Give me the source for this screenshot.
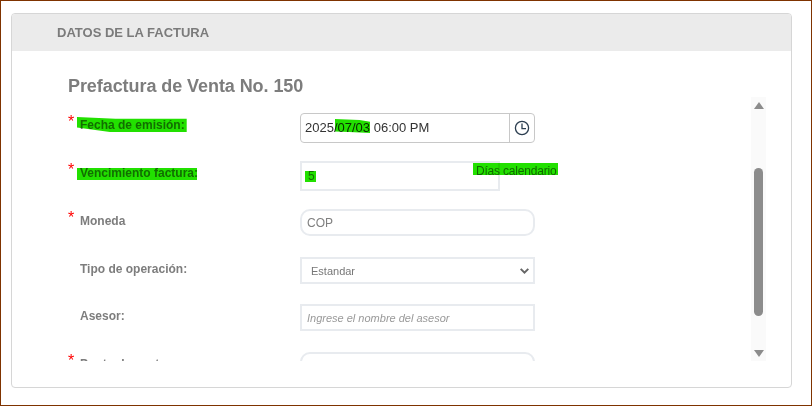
<div class="frame">
  <section class="panel">
    <header class="panel-head">DATOS DE LA FACTURA</header>
    <div class="panel-body">
      <h2 class="title">Prefactura de Venta No. 150</h2>
      <div class="scroll-wrap">
        <div class="form">
          <div class="row">
            <label class="lbl"><span class="req">*</span><span class="txt mark mark-fecha">Fecha de emisión:</span></label>
            <div class="date-group">
              <div class="date-input">2025<span class="mark mark-date">/07/03</span> 06:00 PM</div>
              <button class="clock" aria-label="Abrir reloj">
                <svg width="18" height="18" viewBox="0 0 18 18" fill="none" stroke="#2c3e50" stroke-width="1.3">
                  <circle cx="9" cy="9" r="6.6" />
                  <path d="M9 4.6V9.6H13" />
                </svg>
              </button>
            </div>
          </div>
          <div class="row">
            <label class="lbl"><span class="req">*</span><span class="txt mark mark-venc">Vencimiento factura:</span></label>
            <div class="due">
              <div class="box short"><span class="mark mark-num">5</span></div>
              <span class="days mark mark-days">Días calendario</span>
            </div>
          </div>
          <div class="row">
            <label class="lbl"><span class="req">*</span><span class="txt">Moneda</span></label>
            <div class="box round">COP</div>
          </div>
          <div class="row tight">
            <label class="lbl"><span class="req"></span><span class="txt">Tipo de operación:</span></label>
            <div class="box select">
              <span>Estandar</span>
              <svg width="9" height="6" viewBox="0 0 9 6" fill="none" stroke="#666" stroke-width="2"><path d="M.7 .9L4.5 4.6L8.3 .9" /></svg>
            </div>
          </div>
          <div class="row">
            <label class="lbl"><span class="req"></span><span class="txt">Asesor:</span></label>
            <div class="box ph">Ingrese el nombre del asesor</div>
          </div>
          <div class="row">
            <label class="lbl"><span class="req">*</span><span class="txt">Punto de venta</span></label>
            <div class="box round"></div>
          </div>
        </div>
        <div class="scrollbar">
          <div class="arrow up"></div>
          <div class="track"><div class="thumb"></div></div>
          <div class="arrow down"></div>
        </div>
      </div>
    </div>
  </section>
</div>

<style>
  :global(body) {
    margin: 0;
    background: #fff;
  }

  .frame {
    box-sizing: border-box;
    width: 812px;
    height: 406px;
    padding: 12px 19px 17px 10px;
    border: 1px solid #7f3300;
    font-family: "Liberation Sans", Arial, sans-serif;
    background: #fff;
    overflow: hidden;
  }

  .panel {
    height: 100%;
    box-sizing: border-box;
    border: 1px solid #d6d6d6;
    border-radius: 4px;
    display: flex;
    flex-direction: column;
    overflow: hidden;
  }

  .panel-head {
    height: 37px;
    flex: none;
    background: #ebebeb;
    padding-left: 45px;
    line-height: 38px;
    font-size: 13px;
    font-weight: bold;
    color: #7b7b7b;
  }

  .panel-body {
    flex: 1;
    padding: 24px 25px 0 56px;
    min-height: 0;
  }

  .title {
    margin: 0;
    font-size: 18px;
    line-height: 22px;
    font-weight: bold;
    color: #7d7d7d;
    letter-spacing: -0.07px;
  }

  .scroll-wrap {
    display: flex;
    justify-content: space-between;
    height: 264px;
  }

  .form {
    flex: 1;
    height: 248px;
    margin-top: 16px;
    overflow: hidden;
  }

  .row {
    display: flex;
    height: 48px;
  }

  .tight {
    height: 47px;
  }

  .lbl {
    width: 232px;
    flex: none;
    display: flex;
    align-items: flex-start;
    font-size: 12px;
    font-weight: bold;
    color: #7d7d7d;
  }

  .req {
    width: 12px;
    flex: none;
    margin-top: 1px;
    color: #f00;
    font-size: 16px;
    line-height: 16px;
    font-weight: normal;
  }

  .txt {
    line-height: 14px;
    margin-top: 5px;
  }

  .mark {
    position: relative;
  }

  .mark::after {
    content: "";
    position: absolute;
    background: #22e000;
    mix-blend-mode: multiply;
  }

  .mark-fecha::after {
    inset: -1px -2px 0 -3px;
    clip-path: polygon(0 0, 35% 12%, 100% 12%, 100% 100%, 30% 100%, 0 70%);
  }

  .mark-venc::after {
    inset: 2px 1px 0 -3px;
  }

  .mark-date::after {
    inset: -1px 0 2px 1px;
    clip-path: polygon(0 0, 70% 8%, 100% 20%, 100% 100%, 40% 92%, 0 90%);
  }

  .mark-num::after {
    inset: 2px -1px 1px -3px;
  }

  .mark-days::after {
    inset: -1px -2px 3px -3px;
  }

  .date-group {
    display: flex;
    width: 235px;
    height: 30px;
    box-sizing: border-box;
    border: 1px solid #c8c8c8;
    border-radius: 4px;
  }

  .date-input {
    flex: 1;
    padding-left: 4px;
    font-size: 13px;
    line-height: 28px;
    color: #333;
  }

  .clock {
    width: 25px;
    padding: 0;
    border: 0;
    border-left: 1px solid #c8c8c8;
    background: transparent;
    display: flex;
    align-items: center;
    justify-content: center;
  }

  .due {
    display: flex;
    width: 260px;
    align-items: flex-start;
  }

  .box {
    box-sizing: border-box;
    width: 235px;
    height: 27px;
    flex: none;
    border: 2px solid #e8ebef;
    font-size: 12px;
    color: #808080;
    padding: 0 5px;
    line-height: 24px;
  }

  .short {
    width: 200px;
    height: 30px;
    line-height: 26px;
    padding-left: 6px;
  }

  .days {
    font-size: 12px;
    color: #777;
    margin: 3px 0 0 -24px;
    line-height: 14px;
    letter-spacing: -0.2px;
    white-space: nowrap;
  }

  .round {
    border-radius: 10px;
  }

  .select {
    display: flex;
    align-items: center;
    justify-content: space-between;
    padding: 0 4px 0 9px;
    font-size: 11px;
    color: #777;
  }

  .ph {
    font-style: italic;
    font-size: 11px;
    color: #999;
  }

  .scrollbar {
    width: 15px;
    flex: none;
    height: 264px;
    background: #fafafa;
    display: flex;
    flex-direction: column;
    align-items: center;
  }

  .track {
    flex: 1;
    width: 100%;
    position: relative;
  }

  .thumb {
    position: absolute;
    left: 3px;
    right: 3px;
    top: 55px;
    height: 148px;
    border-radius: 5px;
    background: #8c8c8c;
  }

  .arrow {
    width: 0;
    height: 0;
    border-left: 5px solid transparent;
    border-right: 5px solid transparent;
  }

  .up {
    margin: 5px 0 4px;
    border-bottom: 7px solid #8c8c8c;
  }

  .down {
    margin: 4px 0 4px;
    border-top: 7px solid #8c8c8c;
  }
</style>
